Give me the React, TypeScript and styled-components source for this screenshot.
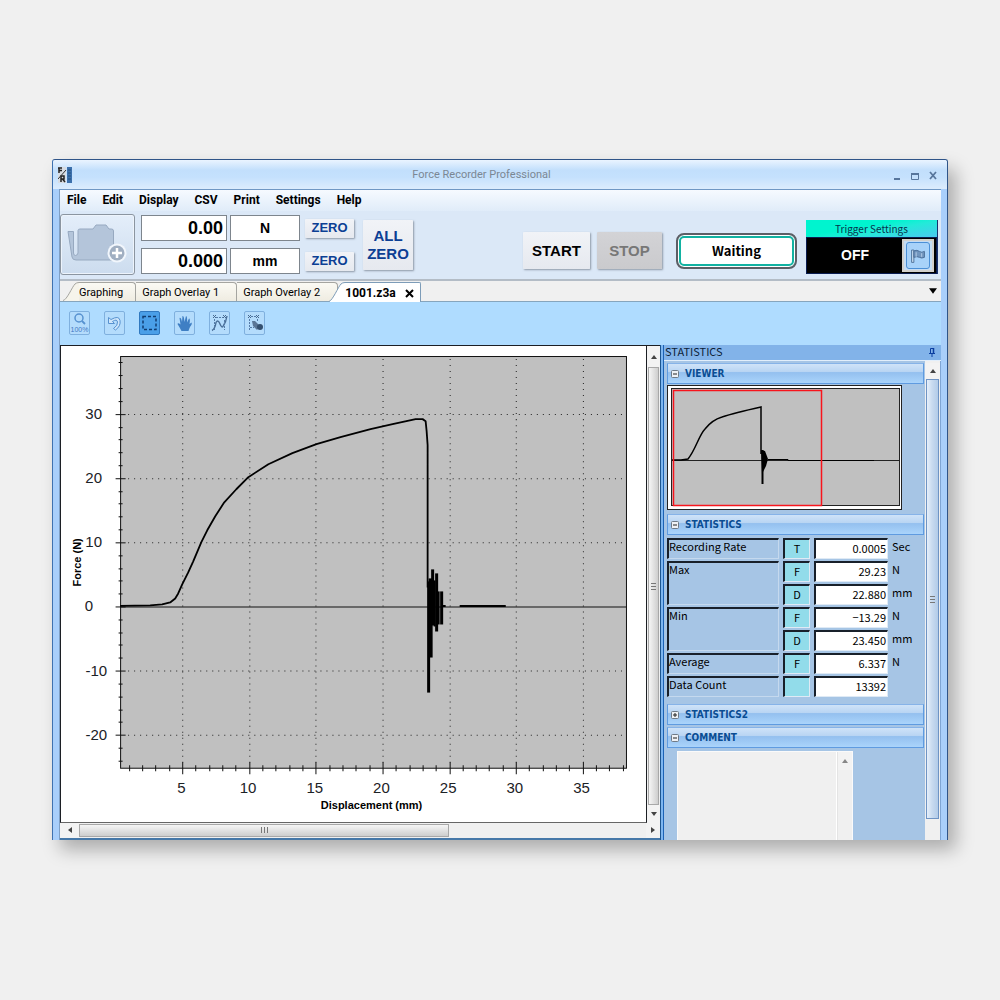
import React from "react";
import styled, { createGlobalStyle, css } from "styled-components";

const ui = `Roboto, "Open Sans", sans-serif`;
const arial = `"Liberation Sans", Arial, sans-serif`;
const gothic = `"Noto Sans CJK JP", "Noto Sans", sans-serif`;
const tahoma = `"DejaVu Sans Condensed", "DejaVu Sans", sans-serif`;

const GlobalStyle = createGlobalStyle`
  *, *::before, *::after { box-sizing: border-box; }
  body { margin: 0; background: #f0f0f0; font-family: ${ui}; font-size: 12px; color: #000; }
  button { margin: 0; padding: 0; border: 0; background: none; font: inherit; color: inherit; }
  svg { display: block; }
`;

const Page = styled.div`
  min-height: 1000px;
  padding: 159px 52px;
  background: #f0f0f0;
`;

const AppWindow = styled.main`
  overflow: hidden;
  border: 1px solid #2f5488;
  border-bottom: 0;
  border-left-color: #3f72b0;
  border-radius: 3px 3px 0 0;
  background: #a9cffb;
  box-shadow: 8px 10px 18px rgba(0, 0, 0, 0.28);
`;

const TitleBar = styled.header`
  display: grid;
  grid-template-columns: 60px 1fr 60px;
  align-items: center;
  height: 29px;
  padding: 0 8px 0 5px;
  background: linear-gradient(#eaf4ff 0, #c2dffc 35%, #c5e1fd 60%, #dcecfd 100%);
`;

const AppTitle = styled.h1`
  margin: 0;
  padding-right: 34px;
  color: #7b8794;
  font: 400 11px/16px ${ui};
  text-align: center;
`;

const WindowButtons = styled.div`
  display: flex;
  justify-content: flex-end;
  gap: 6px;
  padding-top: 3px;
  color: #58769c;
`;

const Client = styled.div`
  margin: 0 6px;
  border-top: 1px solid #6f97c4;
  border-left: 1px solid #7f9fc4;
  background: #dbe8f7;
`;

const MenuBar = styled.nav`
  display: flex;
  align-items: center;
  gap: 16px;
  height: 21px;
  padding: 0 7px 2px;
  background: linear-gradient(#f6faff, #e0ecf9);
  font: 700 12px/18px ${ui};
`;

const Controls = styled.section`
  display: flex;
  align-items: center;
  height: 70px;
  padding: 3px 3px 4px 0;
  border-bottom: 2px solid #b3bcc6;
`;

const FolderButton = styled.button`
  display: grid;
  place-items: center;
  width: 75px;
  height: 61px;
  padding-right: 3px;
  border: 1px solid #8b95a0;
  border-radius: 3px;
  background: linear-gradient(#e4eefa, #ccdcee);
  box-shadow: inset 0 0 0 1px #edf4fc;
`;

const Readouts = styled.div`
  display: grid;
  grid-template-columns: 86px 70px 50px;
  grid-auto-rows: 26px;
  align-items: center;
  gap: 7px 3px;
  margin-left: 6px;
`;

const Readout = styled.output<{ $unit?: boolean }>`
  height: 26px;
  padding: 0 3px;
  border: 1px solid #7d858d;
  background: #fff;
  font: ${(p) => (p.$unit ? "700 14px" : "700 18px")} / 24px ${arial};
  text-align: ${(p) => (p.$unit ? "center" : "right")};
`;

const PushButton = styled.button<{ $kind?: "zero" | "all" | "start" | "stop" }>`
  border-radius: 1px;
  background: linear-gradient(#f1f3f7, #e6e9ef);
  box-shadow: 1px 1px 2px rgba(90, 100, 115, 0.6);
  color: #0c3f94;
  font: 700 15px/18px ${arial};
  ${(p) => p.$kind === "zero" && css`height: 19px; width: 49px; margin-left: 2px; font-size: 13px;`}
  ${(p) => p.$kind === "all" && css`width: 50px; height: 50px; margin-left: 10px;`}
  ${(p) => p.$kind === "start" && css`width: 67px; height: 37px; color: #000;`}
  ${(p) => p.$kind === "stop" && css`
    width: 65px; height: 37px; margin-left: 7px; color: #777;
    background: linear-gradient(#d3d3d6, #cacacd);
  `}
`;

const Spacer = styled.div`
  flex: 1;
`;

const RunGroup = styled.div`
  display: flex;
  align-items: center;
  padding-top: 12px;
`;

const Waiting = styled.output`
  width: 121px;
  height: 36px;
  margin-left: 14px;
  border: 2px solid #5c5e66;
  border-radius: 8px;
  background: #fff;
  box-shadow: inset 0 0 0 1px #fff, inset 0 0 0 3px #12b2a2;
  font: 700 13px/32px ${gothic};
  text-align: center;
`;

const Trigger = styled.div`
  width: 132px;
  height: 54px;
  margin: 4px 0 0 9px;
  border-right: 1px solid #18306c;
  background: #000;
`;

const TriggerTitle = styled.div`
  height: 17px;
  background: linear-gradient(170deg, #00f4cf 40%, #23ead9 60%, #4bc8ef);
  color: #06324c;
  font: 400 10px/17px ${gothic};
  text-align: center;
`;

const TriggerBody = styled.div`
  display: grid;
  grid-template-columns: 1fr 33px;
  align-items: center;
  height: 37px;
  padding: 1px;
  border: 1px solid #0a1c50;
  color: #fff;
  font: 700 14px/33px ${arial};
  text-align: center;
`;

const FlagButton = styled.button`
  display: grid;
  place-items: center;
  width: 32px;
  height: 33px;
  border: 2px solid #d2d0cc;
  background: #c4dcf4;

  svg {
    border: 1px solid #4b8fd6;
    border-radius: 3px;
    background: #a8d2f9;
  }
`;

const TabStrip = styled.div`
  display: flex;
  align-items: flex-end;
  height: 21px;
  padding-left: 3px;
  border-bottom: 1px solid #86a5bd;
  background: #f0f0f0;
`;

const TabWrap = styled.div<{ $active?: boolean }>`
  display: flex;
  height: 19px;
  ${(p) => p.$active && css`
    z-index: 1;
    height: 20px;
    margin: 0 0 -1px -9px;
  `}
`;

const Tab = styled.button<{ $active?: boolean; $slanted?: boolean }>`
  display: flex;
  align-items: center;
  gap: 9px;
  height: 100%;
  padding: ${(p) => (p.$slanted ? "1px 12px 0 0" : "1px 17px 0 6px")};
  border: 1px solid #a5a5a0;
  border-width: 1px 1px 0 0;
  border-radius: 0 4px 0 0;
  background: ${(p) => (p.$active ? "#fff" : "linear-gradient(#fbfaf4, #efece1)")};
  font: 400 11px/18px ${ui};
  ${(p) => p.$active && css`
    padding-right: 6px;
    border-color: #7d9cb8;
    border-radius: 0 2px 0 0;
    font-weight: 700;
    font-size: 12px;
  `}
`;

const TabMenu = styled.button`
  align-self: center;
  margin-left: auto;
  padding: 4px;
`;

const Tools = styled.div`
  display: flex;
  gap: 14px;
  height: 43px;
  padding: 9px;
  background: #afdcff;
`;

const Tool = styled.button<{ $on?: boolean }>`
  width: 21px;
  height: 24px;
  border: 1px solid ${(p) => (p.$on ? "#3079c0" : "#7fb0de")};
  border-radius: 2px;
  background: ${(p) => (p.$on ? "#4a9fe8" : "#b4dcfc")};
`;

const Workspace = styled.div`
  display: grid;
  grid-template-columns: minmax(0, 1fr) 281px;
  background: #a6c5e5;
`;

const GraphPane = styled.section`
  display: grid;
  grid-template-columns: minmax(0, 1fr) 13px;
  grid-template-rows: auto 15px;
  align-content: start;
  border-bottom: 2px solid #4678a8;
  background: #f0f0f0;
`;

const GraphBox = styled.div`
  border: 1px solid #1c1f24;
  border-bottom-color: #666;
  background: #fff;

  svg { width: 100%; height: auto; }
`;

const VScroll = styled.div`
  display: flex;
  flex-direction: column;
  min-height: 0;
  border-top: 1px solid #1c1f24;
  background: #f0f0f0;
`;

const HScroll = styled.div`
  display: flex;
  grid-column: 1 / -1;
  background: #f0f0f0;
`;

const ArrowButton = styled.button<{ $length: number; $across?: boolean }>`
  display: grid;
  flex: none;
  place-items: center;
  width: ${(p) => (p.$across ? `${p.$length}px` : "100%")};
  height: ${(p) => (p.$across ? "100%" : `${p.$length}px`)};
  background: #f3f3f3;
`;

const Thumb = styled.div<{ $across?: boolean; $blue?: boolean }>`
  display: grid;
  flex: ${(p) => (p.$across ? "0 1 370px" : "1 1 0")};
  place-items: center;
  margin: ${(p) => (p.$across ? "1px 0" : "0 1px")};
  border: 1px solid ${(p) => (p.$blue ? "#6f94c4" : "#a8a8a8")};
  background: linear-gradient(
    ${(p) => (p.$across ? "180deg" : "90deg")},
    ${(p) => (p.$blue ? "#e6f0fb, #c9dbf0 45%, #b2cbe8" : "#f6f6f6, #e4e4e4 45%, #cecece")}
  );
`;

const SidePanel = styled.aside`
  display: grid;
  grid-template-columns: 1fr 16px;
  grid-template-rows: 16px 479px;
  min-width: 0;
  padding-left: 4px;
  background: linear-gradient(90deg, #1c558f 0 1px, #7db6f0 1px 3px, #1c62b5 3px 4px, #a6c5e5 4px);
`;

const PanelTitle = styled.h2`
  display: flex;
  grid-column: 1 / -1;
  align-items: flex-start;
  justify-content: space-between;
  margin: 0;
  padding: 0 5px 0 1px;
  border-bottom: 1px solid #e2effc;
  background: #82b3e9;
  color: #0c1e38;
  font: 400 11px/12px ${gothic};

  svg { margin-top: 2px; }
`;

const PanelBody = styled.div`
  padding: 2px 1px 0 3px;
  overflow: hidden;
`;

const PanelScroll = styled.div`
  display: flex;
  flex-direction: column;
  padding: 2px 0 21px;
  border-right: 1px solid #7fa5d4;
  background: #f0f0f0;
`;

const SectionHead = styled.button<{ $gap?: number }>`
  display: flex;
  align-items: center;
  gap: 6px;
  width: 100%;
  height: 21px;
  margin-top: ${(p) => p.$gap ?? 0}px;
  padding: 0 3px;
  border: 1px solid #5f9be0;
  border-top-color: #86b3e8;
  background: linear-gradient(#cfe3f8 0, #b9d5f3 40%, #94c0ef 45%, #aad4fb 100%);
  color: #0a4d93;
  font: 700 10px/18px ${tahoma};
  text-align: left;
`;

const ViewerBox = styled.div`
  width: 235px;
  margin-top: 1px;
  border: 1px solid #222;
  background: #fff;
`;

const StatTable = styled.table`
  width: 261px;
  margin: 1px 0 0 -4px;
  border-spacing: 4px 2px;
  table-layout: fixed;
  font: 400 11px/12px ${gothic};

  th, td { height: 21px; padding: 0; font-weight: 400; }
`;

const StatCol = styled.col<{ $width: number }>`
  width: ${(p) => p.$width}px;
`;

const sunken = css`
  border: 1px solid #dfeaf5;
  border-top: 2px solid #18202a;
  border-left: 2px solid #18202a;
`;

const LabelCell = styled.th`
  ${sunken};
  vertical-align: top;
  text-align: left;
  border-color: #18202a #c5d9ee #c5d9ee #18202a;
`;

const CodeCell = styled.td`
  ${sunken};
  background: #92dcea;
  text-align: center;

  && { padding-bottom: 2px; }
`;

const ValueCell = styled.td`
  ${sunken};
  background: #fff;
  text-align: right;

  && { padding: 0 1px 2px 0; }
`;

const UnitCell = styled.td`
  vertical-align: top;
  white-space: nowrap;

  && { padding-top: 2px; }
`;

const CommentBox = styled.div`
  display: flex;
  width: 176px;
  height: 89px;
  margin: 3px 0 0 10px;
  border: 1px solid #fafafa;
  border-bottom: 0;
  background: #f0f0f0;
`;

const CommentArea = styled.textarea`
  flex: 1;
  min-width: 0;
  border: 0;
  border-right: 1px solid #fff;
  outline: 0;
  background: #f0f0f0;
  resize: none;
`;

const CommentScroll = styled.div`
  width: 15px;
  border-left: 1px solid #e4e4e4;
`;

/* ---------- drawings ---------- */

type Dir = "up" | "down" | "left" | "right";
const arrowPaths: Record<Dir, string> = {
  up: "M0 5 3 1 6 5Z",
  down: "M0 1 3 5 6 1Z",
  left: "M5 0 1 3 5 6Z",
  right: "M1 0 5 3 1 6Z",
};
const Arrow = ({ dir, color = "#444", size = 6 }: { dir: Dir; color?: string; size?: number }) => (
  <svg width={size} height={size} viewBox="0 0 6 6" fill={color}>
    <path d={arrowPaths[dir]} />
  </svg>
);

const Grip = ({ across }: { across?: boolean }) => (
  <svg width="8" height="8" viewBox="0 0 8 8" stroke="#777">
    <path d={across ? "M1.5 1V7M4.5 1V7M7.5 1V7" : "M1 1.5H6M1 4.5H6M1 7.5H6"} />
  </svg>
);

const AppIcon = () => (
  <svg width="15" height="16" viewBox="0 0 15 16">
    <rect width="8" height="16" fill="#d8dce2" />
    <path d="M0 1H4M1 1V6M1 3.500H4M3 15V9H6V12H3M4.500 12 7 15" stroke="#222" strokeWidth="1.500" fill="none" />
    <path d="M0 12 8 3" stroke="#333" />
    <rect x="9" width="5" height="16" fill="#3c70ac" />
    <path d="M10 3H13M10 6H13M10 9H13M10 12H13" stroke="#23507f" />
  </svg>
);

const FolderIcon = () => (
  <svg width="62" height="46" viewBox="0 0 62 46">
    <path
      d="M3 9.500H8.500V31Q8.500 33.500 10.500 33.500T13 31V8.500Q13 7 15 7H28L31 3H41L44 7H46.500Q48.500 7 48.500 9V38H11Q7.500 38 7 35Z"
      fill="#b4c5da"
      stroke="#97a9c0"
    />
    <circle cx="52" cy="31" r="9.500" fill="#f1f6fc" />
    <circle cx="52" cy="31" r="7.500" fill="#a0afc2" />
    <path d="M52 26V36M47 31H57" stroke="#fff" strokeWidth="2.500" />
  </svg>
);

const FlagIcon = () => (
  <svg width="24" height="27" viewBox="0 0 24 27">
    <path d="M5 7.500H7.500V21H5Z" fill="#c9dcf0" stroke="#4c6e96" />
    <path d="M7.500 8.500Q11 7 13.500 9T19 9V15.500Q16 17 13.500 15.500T7.500 15.500Z" fill="#7195be" stroke="#486a94" />
    <path d="M10 10V15M16 11V15" stroke="#b6cde6" />
  </svg>
);

const SlantEdge = ({ active }: { active?: boolean }) => {
  const h = active ? 20 : 19;
  return (
    <svg width="16" height={h} viewBox={`0 0 16 ${h}`}>
      <path d={`M0 ${h}C4 18 9 5 12 2Q13.500 .5 16 .5V${h}Z`} fill={active ? "#fff" : "#f6f4eb"} />
      <path
        d={`M0 ${h - 0.5}C4 18 9 5 12 2Q13.500 .5 16 .5`}
        fill="none"
        stroke={active ? "#7d9cb8" : "#a5a5a0"}
      />
    </svg>
  );
};

const toolColor = "#5792d0";
const toolIcons: { name: string; on?: boolean; art: React.ReactNode }[] = [
  {
    name: "Zoom 100%",
    art: (
      <>
        <circle cx="9" cy="6" r="4" fill="none" stroke={toolColor} strokeWidth="1.500" />
        <path d="M12 9 15 12" stroke={toolColor} strokeWidth="1.800" />
        <text x="9.500" y="20" textAnchor="middle" fontFamily="Liberation Sans, sans-serif" fontSize="7" fill="#4179c4">
          100%
        </text>
      </>
    ),
  },
  {
    name: "Undo",
    art: (
      <path
        d="M3.500 5.500V11.500H9.500L7.500 9.500Q12 6.500 12.500 10T8.500 16.500L10.500 18Q16 14 15 8.500T6 7.500Z"
        fill="#cfe6fb"
        stroke={toolColor}
      />
    ),
  },
  {
    name: "Select area",
    on: true,
    art: <rect x="3" y="4.500" width="13" height="13" fill="none" stroke="#103c70" strokeWidth="1.500" strokeDasharray="3 2" />,
  },
  {
    name: "Pan",
    art: (
      <path
        d="M6.500 19Q5 16 2.500 12Q3 10.500 5.500 12.500L4.500 6Q6 5 7 10L7.500 4Q9 3 9.500 10L11 4Q12.500 4 12 10.500L14 6.500Q15.500 6.500 14.500 12L16.500 10.500Q17.500 12 15 15Q14 17 13.500 19Z"
        fill="#3f7fc4"
      />
    ),
  },
  {
    name: "Compare curves",
    art: (
      <>
        <path d="M2 18.500Q5 17 6 10.500Q8 7 10 12T13.500 13.500Q16 10 17 4" fill="none" stroke="#4a6f98" strokeWidth="1.400" />
        <path d="M3 3 6 6M6 3 3 6M13 3 16 6M16 3 13 6" stroke="#46688e" />
        <path d="M6 5.500H13M4.500 7V18M14.500 8V18" stroke="#557ca8" strokeDasharray="2 1" />
      </>
    ),
  },
  {
    name: "Fill selection",
    art: (
      <>
        <path d="M3 3 6 6M6 3 3 6M11 3 14 6M14 3 11 6" stroke="#46688e" />
        <path d="M6 4.500H11M4.500 7V18M12.500 7V10M5 15.500H9" stroke="#557ca8" strokeDasharray="2 1" />
        <path d="M7 9 10 9 15 14 12 18 8 14Z" fill="#5a7696" />
        <circle cx="15" cy="15" r="3" fill="#34506f" />
      </>
    ),
  },
];

/* ---------- graph ---------- */

const PLOT = { left: 59, right: 565, top: 11, bottom: 422 };
const mmX = (mm: number) => 54.5 + mm * 13.32;
const nY = (n: number) => 261 - n * 6.41;

const curve: [number, number][] = [
  [59, 260.5], [89, 260], [101, 259], [109, 257], [114, 253], [117, 248], [121, 239], [127, 227], [132, 216],
  [140, 197], [146, 185], [154, 171], [163, 157], [175, 144], [187, 132], [207, 119], [231, 108], [255, 99],
  [279, 92], [309, 84], [331, 79], [354, 74], [361, 74], [364, 76], [365, 86], [366, 100], [366, 242],
];
const ringing: [number, number, number, number][] = [
  [367, 236, 347, 3], [369, 233, 312, 4], [371, 224, 280, 3], [373, 235, 281, 2], [375, 228, 286, 3],
  [377, 246, 279, 2], [380, 246, 279, 3],
];
const range = (from: number, to: number, step: number) => {
  const out: number[] = [];
  for (let v = from; v <= to; v += step) out.push(v);
  return out;
};

const ForceGraph = () => (
  <svg viewBox="0 1 584 475" role="img" aria-label="Force against displacement">
    <rect x={59.5} y={11.5} width={505} height={411} fill="#c0c0c0" stroke="#111" />
    <g stroke="#222" strokeDasharray="1 5">
      {range(5, 35, 5).map((mm) => (
        <line key={mm} x1={Math.round(mmX(mm)) + 0.5} x2={Math.round(mmX(mm)) + 0.5} y1={PLOT.top + 3} y2={PLOT.bottom} />
      ))}
      {[-20, -10, 10, 20, 30].map((n) => (
        <line key={n} x1={PLOT.left + 8} x2={PLOT.right} y1={Math.round(nY(n)) + 0.5} y2={Math.round(nY(n)) + 0.5} />
      ))}
    </g>
    <g stroke="#111">
      {range(-24, 38, 2).map((n) => {
        const y = Math.round(nY(n)) + 0.5;
        const half = n % 10 === 0 ? 5 : 2;
        return <line key={n} x1={59.5 - half} x2={59.5 + half} y1={y} y2={y} />;
      })}
      {range(1, 38, 1).map((mm) => {
        const x = Math.round(mmX(mm)) + 0.5;
        const half = mm % 5 === 0 ? 6 : 3;
        return <line key={mm} x1={x} x2={x} y1={422.5 - half} y2={422.5 + half} />;
      })}
      <line x1={PLOT.left} x2={PLOT.right} y1={261.5} y2={261.5} />
    </g>
    <polyline points={curve.map((p) => p.join()).join(" ")} fill="none" stroke="#000" strokeWidth="1.800" strokeLinejoin="round" />
    {ringing.map(([x, y1, y2, w]) => (
      <line key={x} x1={x} x2={x} y1={y1} y2={y2} stroke="#000" strokeWidth={w} />
    ))}
    <path d="M381 260.500H384M398 260.500H444" stroke="#000" strokeWidth="2" />
    <g fontFamily="Liberation Sans, Arial, sans-serif" fontSize="15" fill="#1c2226">
      {[30, 20, 10, 0, -10, -20].map((n) => (
        <text key={n} x={n < 0 ? 46 : n === 0 ? 32 : 41} y={nY(n) + 5} textAnchor="end">
          {n}
        </text>
      ))}
      {range(5, 35, 5).map((mm) => (
        <text key={mm} x={mmX(mm) - 1} y="447" textAnchor="middle">
          {mm}
        </text>
      ))}
    </g>
    <g fontFamily="Liberation Sans, Arial, sans-serif" fontSize="11" fontWeight="700" textAnchor="middle">
      <text x="310" y="463">Displacement (mm)</text>
      <text transform="translate(20 217) rotate(-90)">Force (N)</text>
    </g>
  </svg>
);

const ViewerGraph = () => (
  <svg width="233" height="123" viewBox="0 0 233 123" role="img" aria-label="Overview of the recording">
    <rect x="3.500" y="2.500" width="228" height="117" fill="#c0c0c0" stroke="#222" />
    <path d="M4 74.500H231" stroke="#222" />
    <path
      d="M4 74H13L20 73Q24 68 29 57Q34 46 37 43Q44 34 54 31Q66 27 93 21V68"
      fill="none"
      stroke="#000"
      strokeWidth="1.500"
    />
    <path d="M94.500 64V98" stroke="#000" strokeWidth="2" />
    <path d="M93 64 97 65 100 73 98 80 94 88Z" />
    <path d="M100 73.500H120V74.500H206" fill="none" stroke="#000" />
    <rect x="5.500" y="4.500" width="148" height="115" fill="none" stroke="#f8141c" strokeWidth="1.500" />
  </svg>
);

const Toggle = ({ open }: { open: boolean }) => (
  <svg width="8" height="8" viewBox="0 0 8 8">
    <rect x=".5" y=".5" width="7" height="7" rx="1" fill="#eef1f5" stroke="#6f7a86" />
    <path d={open ? "M2 4H6" : "M2 4H6M4 2V6"} stroke="#222" />
  </svg>
);

interface StatRow {
  label?: string;
  span?: number;
  code: string;
  value: string;
  unit: string;
}
const stats: StatRow[] = [
  { label: "Recording Rate", code: "T", value: "0.0005", unit: "Sec" },
  { label: "Max", span: 2, code: "F", value: "29.23", unit: "N" },
  { code: "D", value: "22.880", unit: "mm" },
  { label: "Min", span: 2, code: "F", value: "−13.29", unit: "N" },
  { code: "D", value: "23.450", unit: "mm" },
  { label: "Average", code: "F", value: "6.337", unit: "N" },
  { label: "Data Count", code: "", value: "13392", unit: "" },
];

const Section = ({ title, open = true, gap }: { title: string; open?: boolean; gap?: number }) => (
  <SectionHead $gap={gap} aria-expanded={open}>
    <Toggle open={open} />
    {title}
  </SectionHead>
);

export default function App() {
  return (
    <Page>
      <GlobalStyle />
      <AppWindow>
        <TitleBar>
          <AppIcon />
          <AppTitle>Force Recorder Professional</AppTitle>
          <WindowButtons>
            <button aria-label="Minimize">
              <svg width="12" height="12" viewBox="0 0 12 12"><path d="M3 9H9" stroke="currentColor" strokeWidth="2" /></svg>
            </button>
            <button aria-label="Maximize">
              <svg width="12" height="12" viewBox="0 0 12 12" fill="none" stroke="currentColor">
                <path d="M2.500 4V9.500H9.500V4" />
                <path d="M2 4H10" strokeWidth="2" />
              </svg>
            </button>
            <button aria-label="Close">
              <svg width="12" height="12" viewBox="0 0 12 12"><path d="M3 2 9 9M9 2 3 9" stroke="currentColor" strokeWidth="1.800" /></svg>
            </button>
          </WindowButtons>
        </TitleBar>
        <Client>
          <MenuBar>
            {["File", "Edit", "Display", "CSV", "Print", "Settings", "Help"].map((m) => (
              <button key={m}>{m}</button>
            ))}
          </MenuBar>
          <Controls>
            <FolderButton aria-label="New folder"><FolderIcon /></FolderButton>
            <Readouts>
              <Readout>0.00</Readout>
              <Readout $unit>N</Readout>
              <PushButton $kind="zero">ZERO</PushButton>
              <Readout>0.000</Readout>
              <Readout $unit>mm</Readout>
              <PushButton $kind="zero">ZERO</PushButton>
            </Readouts>
            <PushButton $kind="all">ALL ZERO</PushButton>
            <Spacer />
            <RunGroup>
              <PushButton $kind="start">START</PushButton>
              <PushButton $kind="stop">STOP</PushButton>
              <Waiting>Waiting</Waiting>
            </RunGroup>
            <Trigger>
              <TriggerTitle>Trigger Settings</TriggerTitle>
              <TriggerBody>
                OFF
                <FlagButton aria-label="Trigger flag"><FlagIcon /></FlagButton>
              </TriggerBody>
            </Trigger>
          </Controls>
          <TabStrip role="tablist">
            <TabWrap>
              <SlantEdge />
              <Tab role="tab" $slanted>Graphing</Tab>
            </TabWrap>
            <TabWrap><Tab role="tab">Graph Overlay 1</Tab></TabWrap>
            <TabWrap><Tab role="tab">Graph Overlay 2</Tab></TabWrap>
            <TabWrap $active>
              <SlantEdge active />
              <Tab role="tab" aria-selected $active $slanted>
                1001.z3a
                <svg width="9" height="9" viewBox="0 0 9 9"><path d="M1 1 8 8M8 1 1 8" stroke="#000" strokeWidth="2" /></svg>
              </Tab>
            </TabWrap>
            <TabMenu aria-label="Tab list"><Arrow dir="down" color="#000" size={8} /></TabMenu>
          </TabStrip>
          <Tools>
            {toolIcons.map((t) => (
              <Tool key={t.name} aria-label={t.name} $on={t.on}>
                <svg width="19" height="22" viewBox="0 0 19 22">{t.art}</svg>
              </Tool>
            ))}
          </Tools>
          <Workspace>
            <GraphPane>
              <GraphBox><ForceGraph /></GraphBox>
              <VScroll>
                <ArrowButton $length={21} aria-label="Scroll up"><Arrow dir="up" /></ArrowButton>
                <Thumb><Grip /></Thumb>
                <ArrowButton $length={18} aria-label="Scroll down"><Arrow dir="down" /></ArrowButton>
              </VScroll>
              <HScroll>
                <ArrowButton $length={19} $across aria-label="Scroll left"><Arrow dir="left" /></ArrowButton>
                <Thumb $across><Grip across /></Thumb>
                <Spacer />
                <ArrowButton $length={14} $across aria-label="Scroll right"><Arrow dir="right" /></ArrowButton>
              </HScroll>
            </GraphPane>
            <SidePanel>
              <PanelTitle>
                STATISTICS
                <svg width="8" height="10" viewBox="0 0 8 10" fill="none" stroke="#0b3fa0">
                  <path d="M2.500 6V1.500H5.500V6M1 6.500H7M4 7V10" />
                  <path d="M5.500 1V6" strokeWidth="1.500" />
                </svg>
              </PanelTitle>
              <PanelBody>
                <Section title="VIEWER" />
                <ViewerBox><ViewerGraph /></ViewerBox>
                <Section title="STATISTICS" gap={4} />
                <StatTable>
                  <colgroup>
                    <StatCol $width={112} />
                    <StatCol $width={27} />
                    <StatCol $width={74} />
                    <StatCol $width={28} />
                  </colgroup>
                  <tbody>
                    {stats.map((r, i) => (
                      <tr key={i}>
                        {r.label && <LabelCell scope="row" rowSpan={r.span}>{r.label}</LabelCell>}
                        <CodeCell>{r.code}</CodeCell>
                        <ValueCell>{r.value}</ValueCell>
                        <UnitCell>{r.unit}</UnitCell>
                      </tr>
                    ))}
                  </tbody>
                </StatTable>
                <Section title="STATISTICS2" open={false} gap={5} />
                <Section title="COMMENT" gap={2} />
                <CommentBox>
                  <CommentArea aria-label="Comment" />
                  <CommentScroll>
                    <ArrowButton $length={18} aria-label="Scroll comment up"><Arrow dir="up" color="#888" /></ArrowButton>
                  </CommentScroll>
                </CommentBox>
              </PanelBody>
              <PanelScroll>
                <ArrowButton $length={16} aria-label="Scroll panel up"><Arrow dir="up" /></ArrowButton>
                <Thumb $blue><Grip /></Thumb>
              </PanelScroll>
            </SidePanel>
          </Workspace>
        </Client>
      </AppWindow>
    </Page>
  );
}
